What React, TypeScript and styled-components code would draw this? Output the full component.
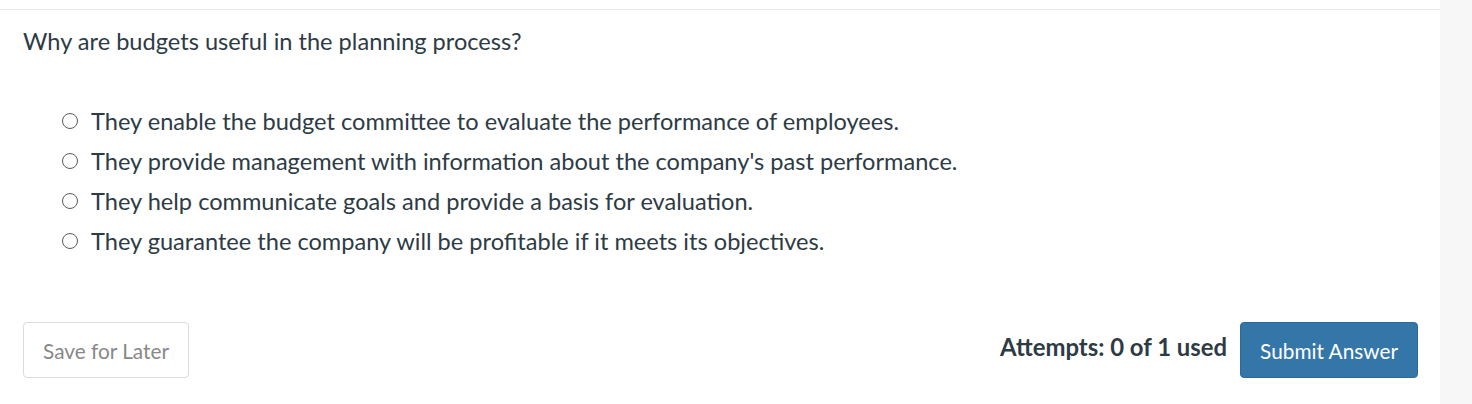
import React, { useState } from "react";
import styled, { createGlobalStyle } from "styled-components";

const GlobalStyle = createGlobalStyle`
  html, body {
    margin: 0;
    padding: 0;
    background: #f7f7f7;
  }
  body {
    font-family: Lato, "Open Sans", "Liberation Sans", sans-serif;
    color: #2d3b45;
  }
`;

const Page = styled.div`
  display: flex;
  width: 1472px;
  height: 404px;
  background: #f7f7f7;
`;

const Panel = styled.div`
  width: 1440px;
  background: #fff;
  padding-top: 9px;
  box-sizing: border-box;
`;

const QuestionBox = styled.div`
  border-top: 1px solid #e6e6e6;
  padding: 15px 23px 0;
`;

const QuestionText = styled.p`
  margin: 0;
  font-size: 23.6px;
  line-height: 32px;
`;

const Answers = styled.div`
  display: flex;
  flex-direction: column;
  margin: 44px 0 0 38px;
`;

const AnswerRow = styled.label`
  display: flex;
  align-items: center;
  gap: 13px;
  height: 40px;
  font-size: 23.6px;
  cursor: pointer;
`;

const Radio = styled.span<{ $checked: boolean }>`
  width: 16px;
  height: 16px;
  margin-left: 1px;
  border-radius: 50%;
  border: 1px solid #5a5a5a;
  box-sizing: border-box;
  display: flex;
  align-items: center;
  justify-content: center;
  &::after {
    content: "";
    width: 8px;
    height: 8px;
    border-radius: 50%;
    background: ${(p) => (p.$checked ? "#2d3b45" : "transparent")};
  }
`;

const Footer = styled.div`
  display: flex;
  align-items: center;
  justify-content: space-between;
  margin-top: 61px;
  padding: 0 22px 0 23px;
`;

const Right = styled.div`
  display: flex;
  align-items: center;
  gap: 13px;
`;

const Attempts = styled.span`
  font-size: 23.9px;
  font-weight: 700;
  margin-top: -7px;
`;

const Button = styled.button<{ $primary?: boolean }>`
  height: 56px;
  padding: 0 19px;
  border-radius: 4px;
  font-family: inherit;
  font-size: 20.8px;
  cursor: pointer;
  border: 1px solid ${(p) => (p.$primary ? "#2e6a99" : "#dcdcdc")};
  background: ${(p) => (p.$primary ? "#3576a9" : "#fff")};
  color: ${(p) => (p.$primary ? "#fff" : "#888")};
`;

const answers = [
  "They enable the budget committee to evaluate the performance of employees.",
  "They provide management with information about the company's past performance.",
  "They help communicate goals and provide a basis for evaluation.",
  "They guarantee the company will be profitable if it meets its objectives.",
];

export default function App() {
  const [picked, setPicked] = useState<number | null>(null);

  return (
    <Page>
      <GlobalStyle />
      <Panel>
        <QuestionBox>
          <QuestionText>Why are budgets useful in the planning process?</QuestionText>
          <Answers>
            {answers.map((a, i) => (
              <AnswerRow key={i} onClick={() => setPicked(i)}>
                <Radio $checked={picked === i} />
                {a}
              </AnswerRow>
            ))}
          </Answers>
        </QuestionBox>
        <Footer>
          <Button>Save for Later</Button>
          <Right>
            <Attempts>Attempts: 0 of 1 used</Attempts>
            <Button $primary>Submit Answer</Button>
          </Right>
        </Footer>
      </Panel>
    </Page>
  );
}
